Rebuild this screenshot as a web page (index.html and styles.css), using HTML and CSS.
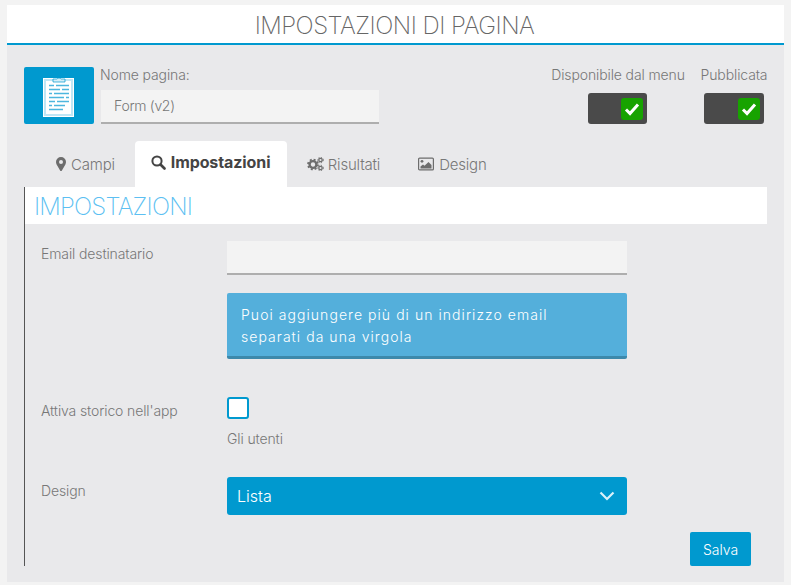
FILE: index.html
```html
<!DOCTYPE html>
<html lang="it">
  <head>
    <meta charset="UTF-8" />
    <meta name="viewport" content="width=device-width, initial-scale=1.0" />
    <title>Impostazioni di pagina</title>
    <link rel="stylesheet" href="styles.css">
  </head>
  <body>
    <div class="panel">
      <h1 class="page-title">IMPOSTAZIONI DI PAGINA</h1>

      <div class="page-top">
        <div class="page-icon">
          <svg width="34" height="45" viewBox="0 0 34 45">
            <rect x="1" y="5" width="31" height="39" fill="#bfe6f5" />
            <rect x="1.500" y="5.500" width="30" height="38" fill="none" stroke="#fff" />
            <rect x="4" y="8" width="25" height="33" fill="#fff" />
            <path d="M11 6h4a2.500 2.500 0 0 1 4 0h4v3H11z" fill="#d5eef8" stroke="#0099cf" stroke-width=".7" />
            <g stroke="#4db6de" stroke-width="1.500">
              <path d="M7 12.500h5M14 12.500h13M7 16.500h11M20 16.500h7M7 20.500h3M12 20.500h15M7 24.500h15M24 24.500h3M7 28.500h6M15 28.500h12M7 32.500h3M12 32.500h11M7 36.500h14" />
            </g>
          </svg>
        </div>
        <div class="page-name">
          <label class="field-label">Nome pagina:</label>
          <input class="text-input name-input" type="text" value="Form (v2)" />
        </div>
        <div class="switches">
          <div class="switch-col menu-col">
            <span class="field-label">Disponibile dal menu</span>
            <div class="switch">
              <span class="switch-knob">
                <svg width="16" height="14" viewBox="0 0 16 14"><path d="M2 7.500l4 4 8-9" fill="none" stroke="#fff" stroke-width="3" /></svg>
              </span>
            </div>
          </div>
          <div class="switch-col">
            <span class="field-label">Pubblicata</span>
            <div class="switch switch-wide">
              <span class="switch-knob">
                <svg width="16" height="14" viewBox="0 0 16 14"><path d="M2 7.500l4 4 8-9" fill="none" stroke="#fff" stroke-width="3" /></svg>
              </span>
            </div>
          </div>
        </div>
      </div>

      <div class="tabs">
        <a class="tab tab-campi">
          <svg width="10" height="14" viewBox="0 0 10 14"><path fill-rule="evenodd" d="M5 0a5 5 0 0 1 5 5c0 1-.3 1.700-.6 2.400L5.900 13.400a1 1 0 0 1-1.800 0L.6 7.400C.3 6.700 0 6 0 5a5 5 0 0 1 5-5zm0 3a2 2 0 1 0 0 4 2 2 0 0 0 0-4z" fill="#6d6d6d" /></svg>
          Campi
        </a>
        <a class="tab tab-active">
          <svg width="15" height="15" viewBox="0 0 15 15"><circle cx="6" cy="6" r="4.600" fill="none" stroke="#444" stroke-width="2" /><path d="M9.500 9.500l4 4" stroke="#444" stroke-width="2.600" stroke-linecap="round" /></svg>
          Impostazioni
        </a>
        <a class="tab tab-risultati">
          <svg width="17" height="14" viewBox="0 0 17 14">
            <circle cx="6" cy="7.500" r="3.400" fill="none" stroke="#6d6d6d" stroke-width="2.400" />
            <circle cx="6" cy="7.500" r="5" fill="none" stroke="#6d6d6d" stroke-width="1.700" stroke-dasharray="2 1.930" />
            <circle cx="13.500" cy="3" r="1.700" fill="none" stroke="#6d6d6d" stroke-width="1.300" />
            <circle cx="13.500" cy="3" r="2.800" fill="none" stroke="#6d6d6d" stroke-width="1" stroke-dasharray="1.300 1.330" />
            <circle cx="13.500" cy="11" r="1.700" fill="none" stroke="#6d6d6d" stroke-width="1.300" />
            <circle cx="13.500" cy="11" r="2.800" fill="none" stroke="#6d6d6d" stroke-width="1" stroke-dasharray="1.300 1.330" />
          </svg>
          Risultati
        </a>
        <a class="tab tab-design">
          <svg width="16" height="14" viewBox="0 0 16 14">
            <rect x=".6" y="1.100" width="14.800" height="11.800" rx="1" fill="none" stroke="#6d6d6d" stroke-width="1.200" />
            <circle cx="4" cy="4.300" r="1.400" fill="#6d6d6d" />
            <path d="M2.500 11.500V9.500l2.500-2 1.500 1.300L10.500 5l3 3v3.500z" fill="#6d6d6d" />
          </svg>
          Design
        </a>
      </div>

      <div class="tab-body">
        <h2 class="section-title">IMPOSTAZIONI</h2>
        <div class="form">
          <label class="field-label row-label">Email destinatario</label>
          <div class="row-field">
            <input class="text-input email-input" type="text" />
            <div class="hint">Puoi aggiungere più di un indirizzo email separati da una virgola</div>
          </div>

          <label class="field-label row-label storico-label">Attiva storico nell'app</label>
          <div class="row-field storico-field">
            <span class="checkbox"></span>
            <div class="field-label checkbox-note">Gli utenti</div>
          </div>

          <label class="field-label row-label design-label">Design</label>
          <div class="row-field design-field">
            <div class="select">
              Lista
              <svg width="16" height="10" viewBox="0 0 16 10"><path d="M1.500 1.500L8 8l6.500-6.500" fill="none" stroke="#d9f1fa" stroke-width="2.200" /></svg>
            </div>
          </div>
        </div>
        <div class="form-actions">
          <button class="save-btn">Salva</button>
        </div>
      </div>
    </div>
  </body>
</html>
```

FILE: styles.css
```css
html,
body {
  height: 100%;
}

body {
  margin: 0;
  padding: 5px 7px 3px;
  box-sizing: border-box;
  background: #f3f3f3;
  font-family: "Inter", "Liberation Sans", sans-serif;
  font-weight: 300;
  color: #6d6d6d;
}

.panel {
  height: 577px;
  background: #e9e9eb;
  overflow: hidden;
}

.page-title {
  margin: 0;
  height: 38px;
  line-height: 41px;
  padding-right: 2px;
  background: #fff;
  border-bottom: 2px solid #0099cf;
  text-align: center;
  font-size: 24px;
  font-weight: 200;
  letter-spacing: -.5px;
  color: #666;
}

.page-top {
  display: flex;
  padding: 22px 17px 0;
  height: 57px;
}

.page-icon {
  width: 70px;
  height: 57px;
  background: #0099cf;
  border-radius: 2px;
  display: flex;
  align-items: center;
  justify-content: center;
}

.field-label {
  font-size: 14px;
  letter-spacing: -.12px;
  color: #777;
}

.page-name {
  margin-left: 6px;
  display: flex;
  flex-direction: column;
}

.page-name .field-label {
  line-height: 16px;
  height: 23px;
}

.text-input {
  display: block;
  box-sizing: border-box;
  background: #f3f3f3;
  border: 0;
  border-bottom: 2px solid #aeaeae;
  padding: 0 13px 2px;
  font-family: inherit;
  font-size: 14px;
  font-weight: 300;
  letter-spacing: -.3px;
  color: #777;
  outline: none;
}

.name-input {
  width: 278px;
  height: 34px;
  margin-left: 1px;
}

.switches {
  margin-left: auto;
  display: flex;
}

.switch-col {
  display: flex;
  flex-direction: column;
  align-items: center;
  width: 66px;
}

.switch-col .field-label {
  line-height: 16px;
  white-space: nowrap;
}

.menu-col {
  width: 134px;
  margin-right: 16px;
}

.switch {
  margin-top: 10px;
  width: 59px;
  height: 31px;
  margin-right: 1px;
  background: #4a4a4a;
  border-radius: 3px;
  display: flex;
  justify-content: flex-end;
  align-items: center;
  padding-right: 4px;
  box-sizing: border-box;
}

.switch-wide {
  width: 60px;
  margin-right: 0;
}

.switch-knob {
  width: 22px;
  height: 22px;
  background: #17a300;
  border-radius: 3px;
  display: flex;
  align-items: center;
  justify-content: center;
}

.tabs {
  display: flex;
  margin: 17px 0 0 33px;
  height: 46px;
}

.tab {
  display: flex;
  align-items: center;
  gap: 5px;
  padding: 0 20px 0 16px;
  font-size: 15px;
  letter-spacing: -.2px;
  color: #777;
  height: 46px;
}

.tab-active {
  width: 152px;
  box-sizing: border-box;
  padding: 0 0 4px 16px;
  background: #fff;
  border-radius: 4px 4px 0 0;
  font-size: 16px;
  letter-spacing: -.1px;
  font-weight: 700;
  color: #444;
}

.tab-risultati {
  padding: 0 21px 0 20px;
  gap: 4px;
}

.tab-design {
  padding-left: 17px;
}

.tab-body {
  margin-left: 17px;
  width: 743px;
  height: 379px;
  border-left: 1px solid #555;
  box-sizing: border-box;
}

.section-title {
  margin: 0;
  height: 37px;
  width: 742px;
  line-height: 39px;
  padding-left: 9px;
  box-sizing: border-box;
  background: #fff;
  font-size: 24px;
  font-weight: 200;
  letter-spacing: -.8px;
  color: #5cbff2;
}

.form {
  display: grid;
  grid-template-columns: 186px 400px;
  padding: 17px 0 0 16px;
}

.row-label {
  line-height: 26px;
}

.email-input {
  width: 400px;
  height: 34px;
}

.hint {
  margin-top: 18px;
  box-sizing: border-box;
  height: 66px;
  padding: 11px 40px 0 14px;
  background: #54afdb;
  border-bottom: 3px solid #3d89ab;
  border-radius: 2px;
  font-size: 14px;
  font-weight: 300;
  line-height: 22px;
  letter-spacing: 1.05px;
  color: #fff;
}

.storico-label,
.storico-field {
  margin-top: 38px;
}

.storico-label {
  padding-top: 1px;
}

.checkbox {
  display: block;
  box-sizing: border-box;
  width: 22px;
  height: 22px;
  background: #fff;
  border: 2px solid #0099cf;
  border-radius: 3px;
}

.checkbox-note {
  margin-top: 11px;
  line-height: 17px;
}

.design-label,
.design-field {
  margin-top: 29px;
}

.design-label {
  line-height: 30px;
}

.select {
  height: 38px;
  margin-top: 1px;
  background: #0099cf;
  border-radius: 3px;
  display: flex;
  align-items: center;
  justify-content: space-between;
  padding: 0 12px 0 10px;
  font-size: 16px;
  color: #fff;
}

.form-actions {
  display: flex;
  justify-content: flex-end;
  margin: 17px 16px 0 0;
}

.save-btn {
  width: 61px;
  height: 34px;
  background: #0099cf;
  border: 0;
  border-radius: 2px;
  font-family: inherit;
  font-size: 14px;
  font-weight: 300;
  color: #fff;
  padding: 0;
}
```
